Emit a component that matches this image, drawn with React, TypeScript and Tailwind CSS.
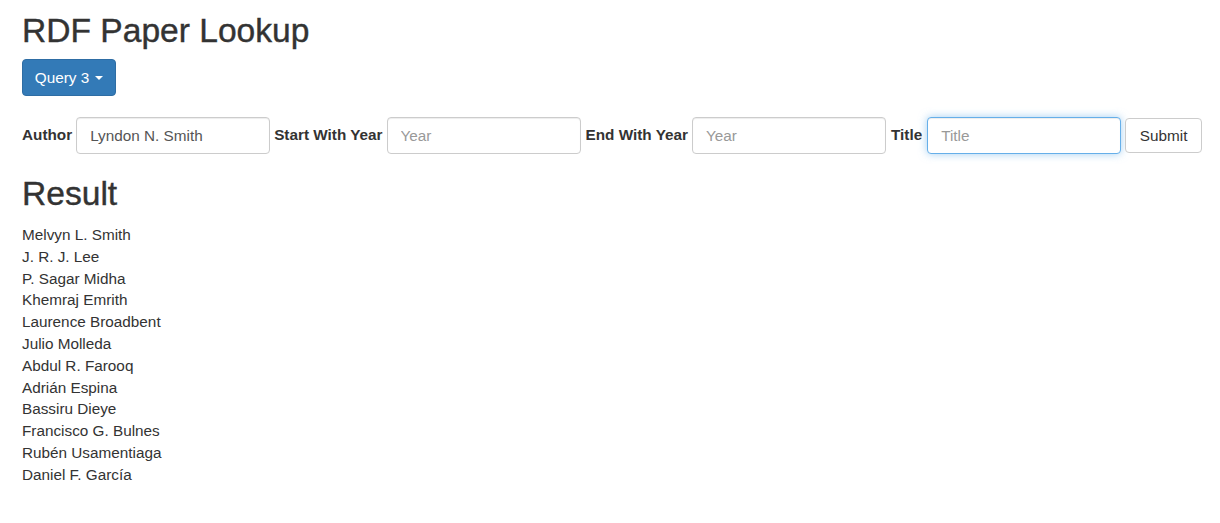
import { useState } from "react";

const results = [
  "Melvyn L. Smith",
  "J. R. J. Lee",
  "P. Sagar Midha",
  "Khemraj Emrith",
  "Laurence Broadbent",
  "Julio Molleda",
  "Abdul R. Farooq",
  "Adrián Espina",
  "Bassiru Dieye",
  "Francisco G. Bulnes",
  "Rubén Usamentiaga",
  "Daniel F. García",
];

function Field({
  label,
  placeholder,
  value,
  focused,
  labelClass = "mr-[4px]",
}: {
  label: string;
  placeholder: string;
  value?: string;
  focused?: boolean;
  labelClass?: string;
}) {
  const [v, setV] = useState(value ?? "");
  return (
    <>
      <label className={`mb-[2px] font-bold ${labelClass}`}>{label}</label>
      <input
        value={v}
        onChange={(e) => setV(e.target.value)}
        placeholder={placeholder}
        className={`mr-[4px] h-[37px] w-[194px] rounded-[4px] border bg-white px-[13px] text-[15.3px] text-[#555] outline-none placeholder:text-[#999] ${
          focused
            ? "border-[#66afe9] shadow-[inset_0_1px_1px_rgba(0,0,0,0.075),0_0_8px_rgba(102,175,233,0.6)]"
            : "border-[#ccc] shadow-[inset_0_1px_1px_rgba(0,0,0,0.075)]"
        }`}
      />
    </>
  );
}

export default function App() {
  return (
    <div className="min-h-[523px] bg-white pl-[22px] font-['Liberation_Sans',Arial,sans-serif] text-[15.3px] leading-[22px] text-[#333]">
      {/* Header */}
      <h2 className="pt-[13px] text-[33.6px] leading-[36px] font-medium [-webkit-text-stroke:0.4px_#333]">
        RDF Paper Lookup
      </h2>

      <button className="mt-[10px] flex h-[37px] w-[94px] items-center justify-center gap-[6px] rounded-[4px] border border-[#2e6da4] bg-[#337ab7] text-white">
        Query 3
        <span className="h-0 w-0 border-x-[4.5px] border-t-[4.5px] border-x-transparent border-t-white" />
      </button>

      {/* Form */}
      <form
        className="mt-[21px] flex items-center"
        onSubmit={(e) => e.preventDefault()}
      >
        <Field label="Author" placeholder="Author" value="Lyndon N. Smith" />
        <Field label="Start With Year" placeholder="Year" />
        <Field label="End With Year" placeholder="Year" labelClass="ml-px mr-[4px]" />
        <Field label="Title" placeholder="Title" focused labelClass="ml-px mr-[5px]" />
        <button
          type="submit"
          className="h-[35px] w-[77px] rounded-[4px] border border-[#ccc] bg-white text-[#333]"
        >
          Submit
        </button>
      </form>

      {/* Result */}
      <h2 className="mt-[22px] text-[33.6px] leading-[36px] font-medium [-webkit-text-stroke:0.4px_#333]">
        Result
      </h2>
      <ul className="mt-[11px] pt-px leading-[21.8px]">
        {results.map((name) => (
          <li key={name}>{name}</li>
        ))}
      </ul>
    </div>
  );
}
